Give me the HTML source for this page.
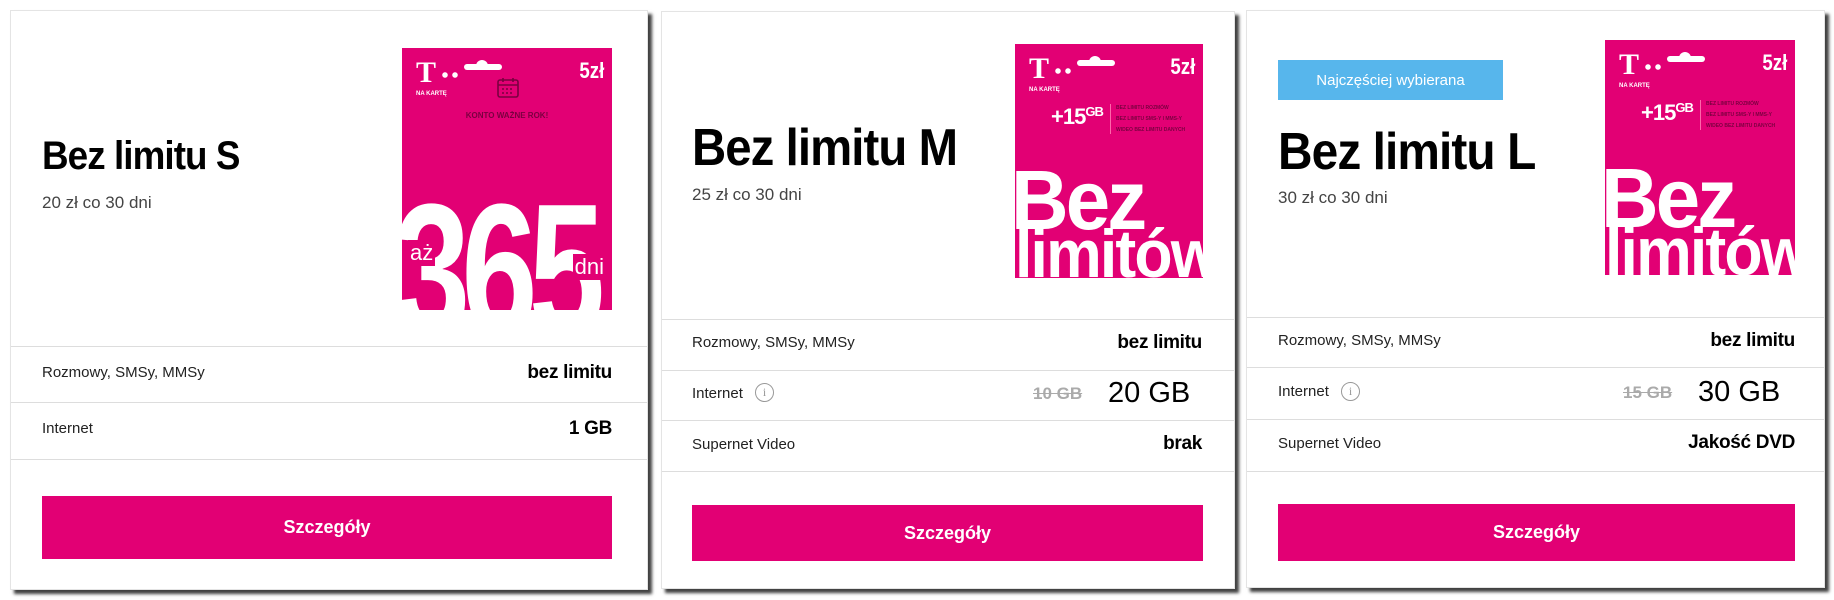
<!DOCTYPE html>
<html><head><meta charset="utf-8"><style>
*{margin:0;padding:0;box-sizing:border-box}
body{width:1834px;height:600px;background:#fff;position:relative;overflow:hidden;font-family:"Liberation Sans",sans-serif;color:#000}
.card{position:absolute;background:#fff;border:1px solid #e4e4e4;box-shadow:4px 4px 3px rgba(0,0,0,.75)}
.abs{position:absolute}
.title{position:absolute;font-weight:bold;white-space:nowrap;transform-origin:0 100%;letter-spacing:-1px}
.sub{position:absolute;font-size:17px;color:#444;white-space:nowrap}
.line{position:absolute;height:1px;background:#ddd}
.lbl{position:absolute;font-size:15px;color:#222;white-space:nowrap}
.val{position:absolute;font-size:19px;font-weight:bold;white-space:nowrap;text-align:right;letter-spacing:-.3px}
.btn{position:absolute;background:#e20074;color:#fff;font-weight:bold;font-size:18px;display:flex;align-items:center;justify-content:center}
.img{position:absolute;background:#e20074;overflow:hidden;color:#fff}
.img .t{position:absolute;left:14px;top:10px;font-family:"Liberation Serif",serif;font-size:30px;font-weight:bold;line-height:1}
.img .dots{position:absolute;left:38px;top:24px;width:18px;height:6px;background:radial-gradient(circle,#fff 2.5px,transparent 3px) 0 0/10px 6px repeat-x}
.img .bar{position:absolute;left:62px;top:16px;width:38px;height:6px;border-radius:3px;background:#fff}
.img .bar:after{content:"";position:absolute;left:12px;top:-4px;width:12px;height:6px;border-radius:6px 6px 0 0;background:#fff}
.img .zl{position:absolute;right:8px;top:10px;font-size:22px;font-weight:bold;transform:scaleX(.85);transform-origin:100% 0}
.img .nk{position:absolute;left:14px;top:43px;font-size:6px;font-weight:bold}
.info{position:absolute;width:19px;height:19px;border:1.5px solid #999;border-radius:50%;color:#999;font-size:12px;line-height:16px;text-align:center;font-family:"Liberation Serif",serif}
.strike{position:absolute;font-size:17px;font-weight:bold;color:#aaa;text-decoration:line-through;white-space:nowrap}
.big{position:absolute;font-size:29px;white-space:nowrap}
</style></head><body>

<!-- Card 1 -->
<div class="card" style="left:10px;top:10px;width:638px;height:580px"></div>
<div class="title" style="left:42px;top:134px;font-size:40px;transform:scaleX(.92)">Bez limitu S</div>
<div class="sub" style="left:42px;top:193px">20 zł co 30 dni</div>
<div class="img" style="left:402px;top:48px;width:210px;height:262px">
  <div class="t">T</div><div class="dots"></div><div class="bar"></div><div class="zl">5zł</div><div class="nk">NA KARTĘ</div>
  <svg class="abs" style="left:94px;top:28px" width="24" height="24" viewBox="0 0 24 24" fill="none" stroke="#7a0040" stroke-width="1.6"><rect x="2" y="4" width="20" height="17" rx="2"/><line x1="2" y1="9" x2="22" y2="9"/><line x1="7" y1="2" x2="7" y2="6"/><line x1="17" y1="2" x2="17" y2="6"/><g fill="#7a0040" stroke="none"><circle cx="7" cy="13" r="1"/><circle cx="11" cy="13" r="1"/><circle cx="15" cy="13" r="1"/><circle cx="7" cy="17" r="1"/><circle cx="11" cy="17" r="1"/><circle cx="15" cy="17" r="1"/></g></svg>
  <div class="abs" style="left:0;width:210px;top:63px;text-align:center;font-size:8px;font-weight:bold;color:#7a0040">KONTO WAŻNE ROK!</div>
  <div class="abs" style="left:-8px;top:128px;font-size:190px;font-weight:bold;line-height:1;letter-spacing:-12px;transform:scaleX(.72);transform-origin:0 0">365</div>
  <div class="abs" style="left:6px;top:192px;font-size:22px;color:#fff;background:#e20074;padding:0 2px">aż</div>
  <div class="abs" style="right:6px;top:206px;font-size:22px;color:#fff;background:#e20074;padding:0 2px">dni</div>
</div>
<div class="line" style="left:11px;top:346px;width:636px"></div>
<div class="line" style="left:11px;top:402px;width:636px"></div>
<div class="line" style="left:11px;top:459px;width:636px"></div>
<div class="lbl" style="left:42px;top:364px">Rozmowy, SMSy, MMSy</div>
<div class="val" style="right:1222px;top:362px">bez limitu</div>
<div class="lbl" style="left:42px;top:420px">Internet</div>
<div class="val" style="right:1222px;top:418px">1 GB</div>
<div class="btn" style="left:42px;top:496px;width:570px;height:63px">Szczegóły</div>

<!-- Card 2 -->
<div class="card" style="left:661px;top:11px;width:574px;height:578px"></div>
<div class="title" style="left:692px;top:118px;font-size:52px;transform:scaleX(.91)">Bez limitu M</div>
<div class="sub" style="left:692px;top:185px">25 zł co 30 dni</div>
<div class="img" style="left:1015px;top:44px;width:188px;height:234px">
  <div class="t">T</div><div class="dots"></div><div class="bar"></div><div class="zl">5zł</div><div class="nk">NA KARTĘ</div>
  <div class="abs" style="left:36px;top:60px;font-size:22px;font-weight:bold;letter-spacing:-1px">+15<span style="font-size:13px;vertical-align:8px">GB</span></div>
  <div class="abs" style="left:95px;top:60px;width:1px;height:30px;background:#f6a"></div>
  <div class="abs" style="left:101px;top:59px;font-size:5px;line-height:11px;color:#7a0040;font-weight:bold">BEZ LIMITU ROZMÓW<br>BEZ LIMITU SMS-Y I MMS-Y<br>WIDEO BEZ LIMITU DANYCH</div>
  <div class="abs" style="left:-4px;top:114px;font-size:84px;font-weight:bold;line-height:1;letter-spacing:-3px;transform:scaleX(.95);transform-origin:0 0">Bez</div>
  <div class="abs" style="left:0px;top:176px;font-size:68px;font-weight:bold;line-height:1;letter-spacing:-2px;transform:scaleX(.92);transform-origin:0 0">limitów</div>
</div>
<div class="line" style="left:662px;top:319px;width:572px"></div>
<div class="line" style="left:662px;top:370px;width:572px"></div>
<div class="line" style="left:662px;top:420px;width:572px"></div>
<div class="line" style="left:662px;top:471px;width:572px"></div>
<div class="lbl" style="left:692px;top:334px">Rozmowy, SMSy, MMSy</div>
<div class="val" style="right:632px;top:332px">bez limitu</div>
<div class="lbl" style="left:692px;top:385px">Internet</div>
<div class="info" style="left:755px;top:383px">i</div>
<div class="strike" style="left:1033px;top:384px">10 GB</div>
<div class="big" style="left:1108px;top:377px">20 GB</div>
<div class="lbl" style="left:692px;top:436px">Supernet Video</div>
<div class="val" style="right:632px;top:433px">brak</div>
<div class="btn" style="left:692px;top:505px;width:511px;height:56px">Szczegóły</div>

<!-- Card 3 -->
<div class="card" style="left:1246px;top:10px;width:579px;height:578px"></div>
<div class="abs" style="left:1278px;top:60px;width:225px;height:40px;background:#57b6ec;color:#fff;font-size:15px;display:flex;align-items:center;justify-content:center">Najczęściej wybierana</div>
<div class="title" style="left:1278px;top:122px;font-size:52px;transform:scaleX(.92)">Bez limitu L</div>
<div class="sub" style="left:1278px;top:188px">30 zł co 30 dni</div>
<div class="img" style="left:1605px;top:40px;width:190px;height:235px">
  <div class="t">T</div><div class="dots"></div><div class="bar"></div><div class="zl">5zł</div><div class="nk">NA KARTĘ</div>
  <div class="abs" style="left:36px;top:60px;font-size:22px;font-weight:bold;letter-spacing:-1px">+15<span style="font-size:13px;vertical-align:8px">GB</span></div>
  <div class="abs" style="left:95px;top:60px;width:1px;height:30px;background:#f6a"></div>
  <div class="abs" style="left:101px;top:59px;font-size:5px;line-height:11px;color:#7a0040;font-weight:bold">BEZ LIMITU ROZMÓW<br>BEZ LIMITU SMS-Y I MMS-Y<br>WIDEO BEZ LIMITU DANYCH</div>
  <div class="abs" style="left:-4px;top:116px;font-size:84px;font-weight:bold;line-height:1;letter-spacing:-3px;transform:scaleX(.95);transform-origin:0 0">Bez</div>
  <div class="abs" style="left:0px;top:178px;font-size:68px;font-weight:bold;line-height:1;letter-spacing:-2px;transform:scaleX(.92);transform-origin:0 0">limitów</div>
</div>
<div class="line" style="left:1247px;top:317px;width:577px"></div>
<div class="line" style="left:1247px;top:367px;width:577px"></div>
<div class="line" style="left:1247px;top:419px;width:577px"></div>
<div class="line" style="left:1247px;top:471px;width:577px"></div>
<div class="lbl" style="left:1278px;top:332px">Rozmowy, SMSy, MMSy</div>
<div class="val" style="right:39px;top:330px">bez limitu</div>
<div class="lbl" style="left:1278px;top:383px">Internet</div>
<div class="info" style="left:1341px;top:382px">i</div>
<div class="strike" style="left:1623px;top:383px">15 GB</div>
<div class="big" style="left:1698px;top:376px">30 GB</div>
<div class="lbl" style="left:1278px;top:435px">Supernet Video</div>
<div class="val" style="right:39px;top:432px">Jakość DVD</div>
<div class="btn" style="left:1278px;top:504px;width:517px;height:57px">Szczegóły</div>

</body></html>
